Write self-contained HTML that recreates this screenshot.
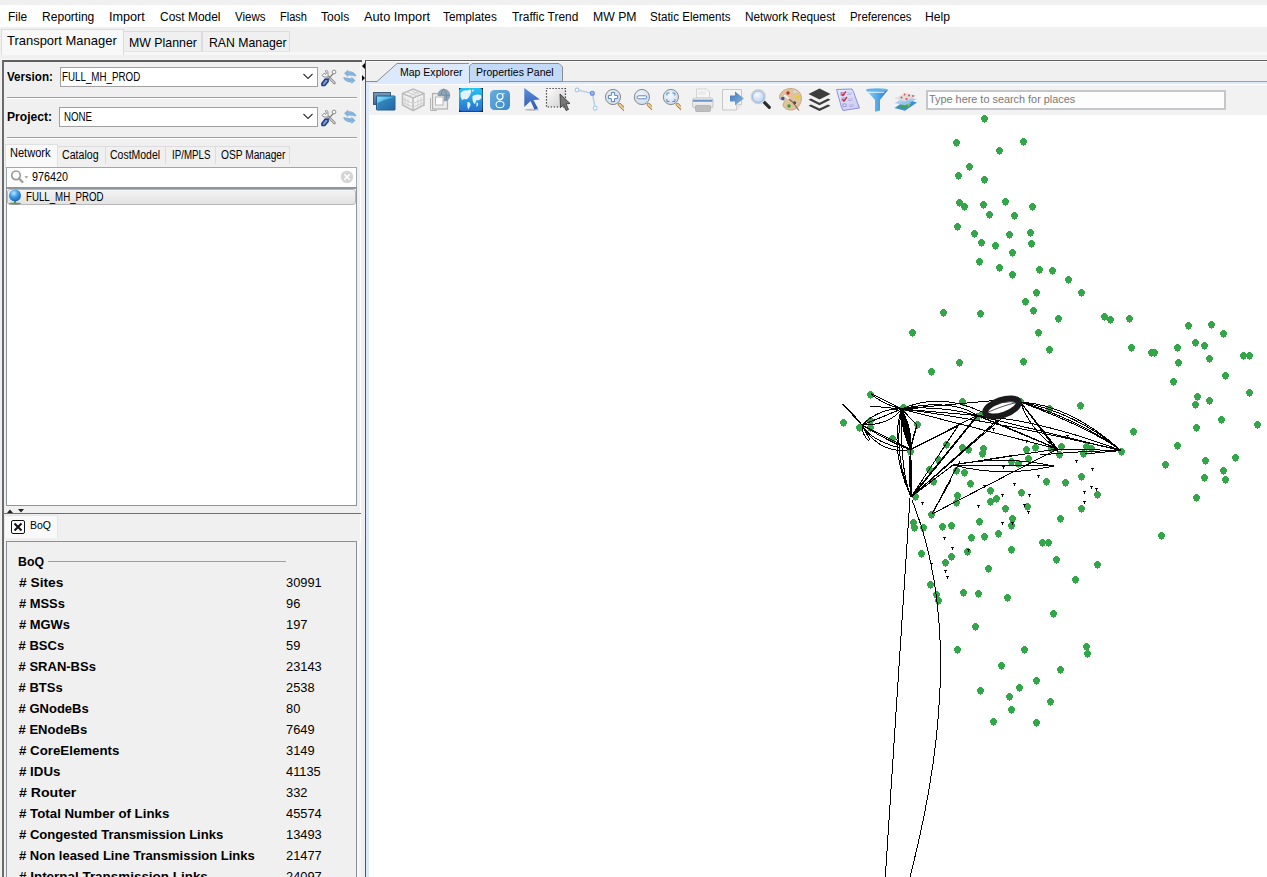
<!DOCTYPE html><html><head><meta charset="utf-8"><style>
html,body{margin:0;padding:0;width:1267px;height:877px;overflow:hidden;background:#f0f0f0;}
body{position:relative;font-family:"Liberation Sans",sans-serif;}
div,span,svg{position:absolute;}
.t{white-space:nowrap;display:block;}
</style></head><body>
<div style="left:0px;top:0px;width:1267px;height:5px;background:#f0f0f0"></div>
<div style="left:0px;top:5px;width:1267px;height:22px;background:#fff"></div>
<span class="t" style="left:8.3px;top:10.84px;font-size:12px;line-height:12px;color:#000;transform:scaleX(0.9930);transform-origin:0 0;">File</span>
<span class="t" style="left:41.6px;top:10.84px;font-size:12px;line-height:12px;color:#000;transform:scaleX(1.0052);transform-origin:0 0;">Reporting</span>
<span class="t" style="left:109.4px;top:10.84px;font-size:12px;line-height:12px;color:#000;transform:scaleX(1.0527);transform-origin:0 0;">Import</span>
<span class="t" style="left:159.7px;top:10.84px;font-size:12px;line-height:12px;color:#000;transform:scaleX(0.9968);transform-origin:0 0;">Cost Model</span>
<span class="t" style="left:234.5px;top:10.84px;font-size:12px;line-height:12px;color:#000;transform:scaleX(0.9593);transform-origin:0 0;">Views</span>
<span class="t" style="left:279.5px;top:10.84px;font-size:12px;line-height:12px;color:#000;transform:scaleX(0.9201);transform-origin:0 0;">Flash</span>
<span class="t" style="left:321px;top:10.84px;font-size:12px;line-height:12px;color:#000;transform:scaleX(1.0067);transform-origin:0 0;">Tools</span>
<span class="t" style="left:363.5px;top:10.84px;font-size:12px;line-height:12px;color:#000;transform:scaleX(1.0640);transform-origin:0 0;">Auto Import</span>
<span class="t" style="left:443.3px;top:10.84px;font-size:12px;line-height:12px;color:#000;transform:scaleX(0.9837);transform-origin:0 0;">Templates</span>
<span class="t" style="left:512px;top:10.84px;font-size:12px;line-height:12px;color:#000;transform:scaleX(0.9941);transform-origin:0 0;">Traffic Trend</span>
<span class="t" style="left:592.5px;top:10.84px;font-size:12px;line-height:12px;color:#000;transform:scaleX(1.0198);transform-origin:0 0;">MW PM</span>
<span class="t" style="left:649.5px;top:10.84px;font-size:12px;line-height:12px;color:#000;transform:scaleX(0.9656);transform-origin:0 0;">Static Elements</span>
<span class="t" style="left:744.5px;top:10.84px;font-size:12px;line-height:12px;color:#000;transform:scaleX(0.9811);transform-origin:0 0;">Network Request</span>
<span class="t" style="left:849.5px;top:10.84px;font-size:12px;line-height:12px;color:#000;transform:scaleX(0.9506);transform-origin:0 0;">Preferences</span>
<span class="t" style="left:924.5px;top:10.84px;font-size:12px;line-height:12px;color:#000;transform:scaleX(1.0130);transform-origin:0 0;">Help</span>
<div style="left:0px;top:52px;width:1267px;height:3px;background:#f7f7f7"></div>
<div style="left:0px;top:59px;width:1267px;height:1px;background:#f8f8f8"></div>
<div style="left:123px;top:31px;width:79px;height:21px;background:#f0f0f0;border:1px solid #dcdcdc;border-bottom:1px solid #e4e4e4;box-sizing:border-box"></div>
<div style="left:202px;top:31px;width:88px;height:21px;background:#f0f0f0;border:1px solid #dcdcdc;border-bottom:1px solid #e4e4e4;box-sizing:border-box"></div>
<div style="left:1px;top:29px;width:123px;height:26px;background:#f8f8f8;border:1px solid #dcdcdc;border-bottom:none;box-sizing:border-box"></div>
<span class="t" style="left:7.2px;top:34.00px;font-size:13px;line-height:13px;color:#000;transform:scaleX(0.9967);transform-origin:0 0;">Transport Manager</span>
<span class="t" style="left:129.4px;top:35.60px;font-size:13px;line-height:13px;color:#000;transform:scaleX(0.9494);transform-origin:0 0;">MW Planner</span>
<span class="t" style="left:209px;top:35.60px;font-size:13px;line-height:13px;color:#000;transform:scaleX(0.9433);transform-origin:0 0;">RAN Manager</span>
<div style="left:2px;top:60px;width:360px;height:817px;border-top:2px solid #5f5f5f;border-left:2px solid #6a6a6a;box-sizing:border-box;background:#f0f0f0"></div>
<div style="left:360px;top:62px;width:1px;height:815px;background:#fff"></div>
<span class="t" style="left:6.6px;top:71.34px;font-size:12px;line-height:12px;color:#000;font-weight:bold;transform:scaleX(0.9694);transform-origin:0 0;">Version:</span>
<div style="left:60px;top:67px;width:258px;height:20px;background:#fff;border:1px solid #a0a0a0;box-sizing:border-box"></div>
<span class="t" style="left:62px;top:71.34px;font-size:12px;line-height:12px;color:#000;transform:scaleX(0.8154);transform-origin:0 0;">FULL_MH_PROD</span>
<svg style="left:303px;top:73px" width="10" height="7"><path d="M0.5 1 L5 5.5 L9.5 1" fill="none" stroke="#333" stroke-width="1.1"/></svg>
<div style="left:7px;top:97px;width:350px;height:1px;background:#a0a0a0"></div>
<div style="left:7px;top:98px;width:350px;height:1px;background:#fff"></div>
<span class="t" style="left:6.6px;top:111.24px;font-size:12px;line-height:12px;color:#000;font-weight:bold;transform:scaleX(1.0072);transform-origin:0 0;">Project:</span>
<div style="left:59px;top:107px;width:259px;height:20px;background:#fff;border:1px solid #a0a0a0;box-sizing:border-box"></div>
<span class="t" style="left:63.9px;top:111.24px;font-size:12px;line-height:12px;color:#000;transform:scaleX(0.8105);transform-origin:0 0;">NONE</span>
<svg style="left:303px;top:113px" width="10" height="7"><path d="M0.5 1 L5 5.5 L9.5 1" fill="none" stroke="#333" stroke-width="1.1"/></svg>
<div style="left:7px;top:137px;width:350px;height:1px;background:#a0a0a0"></div>
<div style="left:7px;top:138px;width:350px;height:1px;background:#fff"></div>
<div style="left:57px;top:146px;width:49px;height:18px;background:#f0f0f0;border:1px solid #dcdcdc;border-bottom:none;box-sizing:border-box"></div>
<span class="t" style="left:62.4px;top:149.34px;font-size:12px;line-height:12px;color:#000;transform:scaleX(0.8849);transform-origin:0 0;">Catalog</span>
<div style="left:105px;top:146px;width:61px;height:18px;background:#f0f0f0;border:1px solid #dcdcdc;border-bottom:none;box-sizing:border-box"></div>
<span class="t" style="left:110.4px;top:149.34px;font-size:12px;line-height:12px;color:#000;transform:scaleX(0.8735);transform-origin:0 0;">CostModel</span>
<div style="left:165px;top:146px;width:51px;height:18px;background:#f0f0f0;border:1px solid #dcdcdc;border-bottom:none;box-sizing:border-box"></div>
<span class="t" style="left:171.6px;top:149.34px;font-size:12px;line-height:12px;color:#000;transform:scaleX(0.8110);transform-origin:0 0;">IP/MPLS</span>
<div style="left:215px;top:146px;width:75px;height:18px;background:#f0f0f0;border:1px solid #dcdcdc;border-bottom:none;box-sizing:border-box"></div>
<span class="t" style="left:221.4px;top:149.34px;font-size:12px;line-height:12px;color:#000;transform:scaleX(0.8494);transform-origin:0 0;">OSP Manager</span>
<div style="left:5px;top:144px;width:53px;height:24px;background:#f9f9f9;border:1px solid #e0e0e0;border-bottom:none;box-sizing:border-box"></div>
<span class="t" style="left:9.9px;top:147.24px;font-size:12px;line-height:12px;color:#000;transform:scaleX(0.9203);transform-origin:0 0;">Network</span>
<div style="left:6px;top:167px;width:351px;height:21px;background:#fff;border:1px solid #a0a6ae;box-sizing:border-box"></div>
<span class="t" style="left:31.5px;top:171.14px;font-size:12px;line-height:12px;color:#000;transform:scaleX(0.8990);transform-origin:0 0;">976420</span>
<div style="left:6px;top:187px;width:351px;height:319px;background:#fff;border:1px solid #8f959c;border-top:none;box-sizing:border-box"></div>
<div style="left:6px;top:187px;width:351px;height:2px;background:#8f959c"></div>
<div style="left:7px;top:189px;width:349px;height:16px;background:linear-gradient(#f4f4f4,#e2e2e2);border:1px solid #b8b8b8;border-radius:3px;box-sizing:border-box"></div>
<span class="t" style="left:26.4px;top:191.34px;font-size:12px;line-height:12px;color:#000;transform:scaleX(0.8081);transform-origin:0 0;">FULL_MH_PROD</span>
<div style="left:4px;top:513px;width:357px;height:1px;background:#6e6e6e"></div>
<svg style="left:6px;top:508px" width="20" height="6"><path d="M1 5 L4 1.5 L7 5Z M12 1 L18 1 L15 4.5Z" fill="#222"/></svg>
<div style="left:4px;top:515px;width:54px;height:23px;background:#f9f9f9;border:1px solid #e6e6e6;border-bottom:none;box-sizing:border-box"></div>
<svg style="left:11px;top:520px" width="14" height="14"><rect x="0.5" y="0.5" width="13" height="13" rx="1.5" fill="#fff" stroke="#111"/><path d="M3.5 3.5 L10.5 10.5 M10.5 3.5 L3.5 10.5" stroke="#111" stroke-width="2"/></svg>
<span class="t" style="left:29.8px;top:520.49px;font-size:11px;line-height:11px;color:#000;transform:scaleX(0.9541);transform-origin:0 0;">BoQ</span>
<div style="left:6px;top:541px;width:351px;height:336px;background:#f0f0f0;border:1px solid #8a9098;border-bottom:none;box-sizing:border-box"></div>
<div style="left:357px;top:541px;width:4px;height:336px;background:#f7f7f7"></div>
<span class="t" style="left:18px;top:554.50px;font-size:13px;line-height:13px;color:#000;font-weight:bold;transform:scaleX(0.9475);transform-origin:0 0;">BoQ</span>
<div style="left:48px;top:561px;width:238px;height:1px;background:#a0a0a0"></div>
<span class="t" style="left:18.6px;top:576.00px;font-size:13px;line-height:13px;color:#000;font-weight:bold;transform:scaleX(1.0593);transform-origin:0 0;"># Sites</span>
<span class="t" style="left:285.6px;top:577.13px;font-size:12.6px;line-height:12.6px;color:#000;transform:scaleX(1.0200);transform-origin:0 0;">30991</span>
<span class="t" style="left:18.6px;top:597.00px;font-size:13px;line-height:13px;color:#000;font-weight:bold;transform:scaleX(0.9926);transform-origin:0 0;"># MSSs</span>
<span class="t" style="left:285.6px;top:598.13px;font-size:12.6px;line-height:12.6px;color:#000;transform:scaleX(1.0200);transform-origin:0 0;">96</span>
<span class="t" style="left:18.6px;top:618.00px;font-size:13px;line-height:13px;color:#000;font-weight:bold;transform:scaleX(0.9945);transform-origin:0 0;"># MGWs</span>
<span class="t" style="left:285.6px;top:619.13px;font-size:12.6px;line-height:12.6px;color:#000;transform:scaleX(1.0200);transform-origin:0 0;">197</span>
<span class="t" style="left:18.6px;top:639.00px;font-size:13px;line-height:13px;color:#000;font-weight:bold;transform:scaleX(1.0000);transform-origin:0 0;"># BSCs</span>
<span class="t" style="left:285.6px;top:640.13px;font-size:12.6px;line-height:12.6px;color:#000;transform:scaleX(1.0200);transform-origin:0 0;">59</span>
<span class="t" style="left:18.6px;top:660.00px;font-size:13px;line-height:13px;color:#000;font-weight:bold;transform:scaleX(1.0000);transform-origin:0 0;"># SRAN-BSs</span>
<span class="t" style="left:285.6px;top:661.13px;font-size:12.6px;line-height:12.6px;color:#000;transform:scaleX(1.0200);transform-origin:0 0;">23143</span>
<span class="t" style="left:18.6px;top:681.00px;font-size:13px;line-height:13px;color:#000;font-weight:bold;transform:scaleX(1.0000);transform-origin:0 0;"># BTSs</span>
<span class="t" style="left:285.6px;top:682.13px;font-size:12.6px;line-height:12.6px;color:#000;transform:scaleX(1.0200);transform-origin:0 0;">2538</span>
<span class="t" style="left:18.6px;top:702.00px;font-size:13px;line-height:13px;color:#000;font-weight:bold;transform:scaleX(1.0000);transform-origin:0 0;"># GNodeBs</span>
<span class="t" style="left:285.6px;top:703.13px;font-size:12.6px;line-height:12.6px;color:#000;transform:scaleX(1.0200);transform-origin:0 0;">80</span>
<span class="t" style="left:18.6px;top:723.00px;font-size:13px;line-height:13px;color:#000;font-weight:bold;transform:scaleX(1.0000);transform-origin:0 0;"># ENodeBs</span>
<span class="t" style="left:285.6px;top:724.13px;font-size:12.6px;line-height:12.6px;color:#000;transform:scaleX(1.0200);transform-origin:0 0;">7649</span>
<span class="t" style="left:18.6px;top:744.00px;font-size:13px;line-height:13px;color:#000;font-weight:bold;transform:scaleX(1.0218);transform-origin:0 0;"># CoreElements</span>
<span class="t" style="left:285.6px;top:745.13px;font-size:12.6px;line-height:12.6px;color:#000;transform:scaleX(1.0200);transform-origin:0 0;">3149</span>
<span class="t" style="left:18.6px;top:765.00px;font-size:13px;line-height:13px;color:#000;font-weight:bold;transform:scaleX(1.0232);transform-origin:0 0;"># IDUs</span>
<span class="t" style="left:285.6px;top:766.13px;font-size:12.6px;line-height:12.6px;color:#000;transform:scaleX(1.0200);transform-origin:0 0;">41135</span>
<span class="t" style="left:18.6px;top:786.00px;font-size:13px;line-height:13px;color:#000;font-weight:bold;transform:scaleX(1.0867);transform-origin:0 0;"># Router</span>
<span class="t" style="left:285.6px;top:787.13px;font-size:12.6px;line-height:12.6px;color:#000;transform:scaleX(1.0200);transform-origin:0 0;">332</span>
<span class="t" style="left:18.6px;top:807.00px;font-size:13px;line-height:13px;color:#000;font-weight:bold;transform:scaleX(1.0217);transform-origin:0 0;"># Total Number of Links</span>
<span class="t" style="left:285.6px;top:808.13px;font-size:12.6px;line-height:12.6px;color:#000;transform:scaleX(1.0200);transform-origin:0 0;">45574</span>
<span class="t" style="left:18.6px;top:828.00px;font-size:13px;line-height:13px;color:#000;font-weight:bold;transform:scaleX(1.0064);transform-origin:0 0;"># Congested Transmission Links</span>
<span class="t" style="left:285.6px;top:829.13px;font-size:12.6px;line-height:12.6px;color:#000;transform:scaleX(1.0200);transform-origin:0 0;">13493</span>
<span class="t" style="left:18.6px;top:849.00px;font-size:13px;line-height:13px;color:#000;font-weight:bold;transform:scaleX(1.0012);transform-origin:0 0;"># Non leased Line Transmission Links</span>
<span class="t" style="left:285.6px;top:850.13px;font-size:12.6px;line-height:12.6px;color:#000;transform:scaleX(1.0200);transform-origin:0 0;">21477</span>
<span class="t" style="left:18.6px;top:870.00px;font-size:13px;line-height:13px;color:#000;font-weight:bold;transform:scaleX(1.0330);transform-origin:0 0;"># Internal Transmission Links</span>
<span class="t" style="left:285.6px;top:871.13px;font-size:12.6px;line-height:12.6px;color:#000;transform:scaleX(1.0200);transform-origin:0 0;">24097</span>
<div style="left:365px;top:60px;width:902px;height:817px;border-top:1px solid #606060;border-left:1px solid #555;box-sizing:border-box;background:#f0f0f0"></div>
<div style="left:366px;top:61px;width:901px;height:1px;background:#fff"></div>
<div style="left:366px;top:81px;width:901px;height:1px;background:#a0a0a0"></div>
<div style="left:366px;top:82px;width:901px;height:2px;background:#dce8fb"></div>
<div style="left:366px;top:82px;width:3px;height:795px;background:#dce8fb"></div>
<div style="left:369px;top:84px;width:898px;height:1px;background:#fff"></div>
<div style="left:369px;top:85px;width:898px;height:30px;background:#f2f2f2"></div>
<div style="left:369px;top:115px;width:898px;height:762px;background:#fff"></div>
<svg style="left:366px;top:62px" width="210" height="22"><path d="M11 19.5 L31 1.5 L103 1.5 L103 21 L11 21Z" fill="#dce8fb"/><path d="M0 19.5 L11 19.5 L31 1.5 L103 1.5" fill="none" stroke="#8c8c8c"/><path d="M103.5 21 L103.5 4 L106 1.5 L193 1.5 L196.5 5 L196.5 19.5 L103.5 19.5Z" fill="#c2d9f8" stroke="#8c8c8c"/></svg>
<span class="t" style="left:399.5px;top:66.69px;font-size:11px;line-height:11px;color:#000;transform:scaleX(0.9554);transform-origin:0 0;">Map Explorer</span>
<span class="t" style="left:476.3px;top:66.69px;font-size:11px;line-height:11px;color:#000;transform:scaleX(0.9554);transform-origin:0 0;">Properties Panel</span>
<div style="left:926px;top:90px;width:300px;height:20px;background:#fdfdfd;border:2px solid #c4c6ca;box-sizing:border-box"></div>
<span class="t" style="left:929px;top:93.08px;font-size:11.6px;line-height:11.6px;color:#7a7a7a;transform:scaleX(0.9376);transform-origin:0 0;">Type here to search for places</span>
<svg style="left:361px;top:62px" width="5" height="20"><path d="M4 1 L1 4 L4 7Z M1 13 L4 16 L1 19Z" fill="#000"/></svg><svg style="left:372px;top:90px" width="25" height="22" viewBox="0 0 25 22"><defs><linearGradient id="g1b" x1="0" y1="0" x2="0" y2="1"><stop offset="0" stop-color="#7d9ab3"/><stop offset="1" stop-color="#3f6585"/></linearGradient><linearGradient id="g1f" x1="0" y1="0" x2="1" y2="1"><stop offset="0" stop-color="#9fe3fb"/><stop offset="0.45" stop-color="#3fb3e6"/><stop offset="1" stop-color="#1c5c9c"/></linearGradient></defs><rect x="1.5" y="2.5" width="17" height="12" fill="url(#g1b)" stroke="#3e5f7c" stroke-width="1"/><rect x="4.5" y="6" width="18.5" height="14" rx="0.5" fill="url(#g1f)" stroke="#1d5a8e" stroke-width="1"/><path d="M5.5 13 Q14 9 22.5 7 L22.5 19.5 L5.5 19.5Z" fill="#2a6aa5" opacity="0.7"/></svg><svg style="left:401px;top:87px" width="25" height="25" viewBox="0 0 25 25"><g fill="none" stroke="#bdbdbd" stroke-width="1.6"><path d="M12 2 L23 6.5 L23 18 L12 23.5 L1.5 18 L1.5 6.5Z"/><path d="M1.5 6.5 L12 11 L23 6.5 M12 11 L12 23.5"/><path d="M4 10 L4 19 M7 11.5 L7 21 M17 11.5 L17 21 M20 10 L20 19.5 M2 12 L12 16.5 L23 12 M2 15.5 L12 20 L23 15.5 M6 5 L16 9 M10 3.5 L20 8 M18 4.5 L8 9" stroke-width="1" stroke="#cfcfcf"/></g></svg><svg style="left:428px;top:87px" width="26" height="26" viewBox="0 0 26 26"><path d="M2.5 11 L2.5 23.5 L9 23.5" fill="none" stroke="#b4b4b4" stroke-width="1"/><rect x="4.5" y="6.5" width="15" height="15.5" fill="#ececec" stroke="#b0b0b0" stroke-width="1.2"/><rect x="7.5" y="10" width="7.5" height="8" fill="#fff" stroke="#b8b8b8" stroke-width="1"/><path d="M9.5 8.5 A6.4 6.4 0 1 1 15.6 14.6 L15.6 8.5Z" fill="#8fa6b7"/><path d="M9.8 8.3 L22 8.3 M15.5 1.8 Q13 5 13.3 8.5 M15.5 1.8 Q19.5 5 18.2 14" fill="none" stroke="#6d8799" stroke-width="0.8"/></svg><svg style="left:458px;top:87px" width="26" height="26" viewBox="0 0 26 26"><rect x="1" y="1" width="24" height="24" fill="#1b1b1b"/><rect x="1" y="1" width="23.5" height="23.5" rx="3" fill="url(#g4)"/><g fill="#f2f9ff" opacity="0.92"><path d="M2.5 6 Q5 2.5 9 3.5 L12 2.5 Q14 4 12.5 7 L11 10 Q9 13.5 6.5 12 L4 13 Q2 10 2.5 6Z"/><path d="M13.5 3 L16 2.5 L15 5Z"/><path d="M14.5 9 Q18 6.5 23 8 L23.5 11 Q21 14.5 18.5 13 L17 17 Q15 16 14.5 13Z"/><path d="M9.5 15 Q12.5 14.5 12.5 18 L10.5 22.5 Q8.5 20 9.5 15Z"/><path d="M18.5 15.5 Q20.5 15 20 18.5 L18.5 20Z"/></g><linearGradient id="g4" x1="0" y1="0" x2="0" y2="1"><stop offset="0" stop-color="#27c3f4"/><stop offset="1" stop-color="#2a6fd0"/></linearGradient></svg><svg style="left:489px;top:89px" width="22" height="22" viewBox="0 0 22 22"><defs><linearGradient id="g5" x1="0" y1="0" x2="1" y2="1"><stop offset="0" stop-color="#6aaee0"/><stop offset="1" stop-color="#3a88c6"/></linearGradient></defs><rect x="1" y="1" width="20" height="20" rx="4.5" fill="url(#g5)"/><circle cx="11" cy="7.5" r="3" fill="none" stroke="#fff" stroke-width="1.1"/><ellipse cx="11" cy="15.5" rx="4" ry="3.3" fill="none" stroke="#fff" stroke-width="1.1"/><path d="M13 10 Q9 11.5 10 12.3 M13.5 5 L15.5 4.5" fill="none" stroke="#fff" stroke-width="1"/></svg><svg style="left:520px;top:86px" width="24" height="26" viewBox="0 0 24 26"><defs><linearGradient id="g6" x1="0" y1="0" x2="0" y2="1"><stop offset="0" stop-color="#5b8fdc"/><stop offset="1" stop-color="#3059b0"/></linearGradient></defs><ellipse cx="12" cy="23.8" rx="7" ry="1" fill="#555" opacity="0.35"/><path d="M4.3 2 L20 13.6 L13.5 14 L18 22.6 L14.5 23.6 L10.5 15 L4.3 20.9Z" fill="url(#g6)"/></svg><svg style="left:544px;top:86px" width="28" height="27" viewBox="0 0 28 27"><defs><linearGradient id="g7" x1="0" y1="0" x2="1" y2="1"><stop offset="0" stop-color="#fdfdfd"/><stop offset="1" stop-color="#cfcfcf"/></linearGradient></defs><rect x="2.5" y="2.5" width="19" height="18.5" fill="url(#g7)"/><rect x="2.5" y="2.5" width="19" height="18.5" fill="none" stroke="#222" stroke-width="1.2" stroke-dasharray="1.2 1.8"/><path d="M16 8 L26 17.5 L22 17.8 L24.5 23.5 L22 24.5 L19.5 18.8 L16.5 21.5Z" fill="#777" stroke="#333" stroke-width="0.8"/></svg><svg style="left:573px;top:87px" width="26" height="25" viewBox="0 0 26 25"><path d="M4 3 L19.3 6.3 L22.2 21.2" fill="none" stroke="#b7d0ea" stroke-width="1.5"/><circle cx="4" cy="3" r="1.9" fill="#fff" stroke="#a9c6e8" stroke-width="1.1"/><circle cx="19.3" cy="6.3" r="2" fill="#9bb6ea" stroke="#6a8be0" stroke-width="1.1"/><circle cx="22.2" cy="21.2" r="1.9" fill="#fff" stroke="#a9c6e8" stroke-width="1.1"/></svg><svg style="left:604px;top:87px" width="20" height="26" viewBox="0 0 20 26"><defs><radialGradient id="gm" cx="0.45" cy="0.4" r="0.6"><stop offset="0" stop-color="#f6f9fd"/><stop offset="1" stop-color="#ccdaeb"/></radialGradient></defs><g transform="translate(9.0,10)"><line x1="6.5" y1="7.5" x2="11.5" y2="12.5" stroke="#a87636" stroke-width="3.4" stroke-linecap="round"/><line x1="6.5" y1="7.5" x2="11.5" y2="12.5" stroke="#ecd099" stroke-width="1.8" stroke-linecap="round"/><circle r="7.6" fill="url(#gm)" stroke="#7f7f7f" stroke-width="0.9"/><path d="M-1.6 -4.6 h3.2 v3 h3 v3.2 h-3 v3 h-3.2 v-3 h-3 v-3.2 h3z" fill="#fff" stroke="#4777c0" stroke-width="0.9" stroke-linejoin="round"/></g></svg><svg style="left:632px;top:87px" width="20" height="26" viewBox="0 0 20 26"><g transform="translate(9.9,10)"><line x1="6.5" y1="7.5" x2="11.5" y2="12.5" stroke="#a87636" stroke-width="3.4" stroke-linecap="round"/><line x1="6.5" y1="7.5" x2="11.5" y2="12.5" stroke="#ecd099" stroke-width="1.8" stroke-linecap="round"/><circle r="7.6" fill="url(#gm)" stroke="#7f7f7f" stroke-width="0.9"/><rect x="-4.8" y="-1.2" width="9.6" height="3" rx="1.4" fill="#fff" stroke="#4777c0" stroke-width="0.9"/></g></svg><svg style="left:661px;top:87px" width="20" height="26" viewBox="0 0 20 26"><g transform="translate(9.9,10)"><line x1="6.5" y1="7.5" x2="11.5" y2="12.5" stroke="#a87636" stroke-width="3.4" stroke-linecap="round"/><line x1="6.5" y1="7.5" x2="11.5" y2="12.5" stroke="#ecd099" stroke-width="1.8" stroke-linecap="round"/><circle r="7.6" fill="url(#gm)" stroke="#7f7f7f" stroke-width="0.9"/><path d="M-4 -1.5 v-2.5 h2.5 M1.5 -4 h2.5 v2.5 M4 2 v2.5 h-2.5 M-1.5 4.5 h-2.5 v-2.5" fill="none" stroke="#4d8bd4" stroke-width="1"/></g></svg><svg style="left:691px;top:88px" width="24" height="25" viewBox="0 0 24 25"><defs><linearGradient id="gp" x1="0" y1="0" x2="0" y2="1"><stop offset="0" stop-color="#fafafa"/><stop offset="1" stop-color="#dedede"/></linearGradient></defs><path d="M5.5 1 h10 l3 3 v6 h-13z" fill="#f7f7f7" stroke="#cfcfcf" stroke-width="0.9"/><path d="M7 4h8 M7 6h8" stroke="#d9d9d9" stroke-width="0.8"/><rect x="1.5" y="10" width="20.5" height="10" rx="2" fill="url(#gp)" stroke="#c4c4c4" stroke-width="0.9"/><rect x="2" y="11.6" width="19.5" height="2.2" fill="#6e98d0"/><rect x="4.5" y="17.5" width="15" height="6" rx="1" fill="#bdbdbd" stroke="#a9a9a9" stroke-width="0.7"/></svg><svg style="left:721px;top:88px" width="25" height="25" viewBox="0 0 25 25"><defs><linearGradient id="ge" x1="0" y1="0" x2="1" y2="1"><stop offset="0" stop-color="#3f78b8"/><stop offset="1" stop-color="#8ab4e4"/></linearGradient></defs><path d="M1.5 1.5 h19 v15 l-5 5.5 h-14z" fill="#f4f4f4" stroke="#c8c8c8" stroke-width="1"/><path d="M15.5 22 v-5.5 h5" fill="#e8e8e8" stroke="#c8c8c8" stroke-width="0.8"/><path d="M9 7.5 h5 v-4 l8.8 7 l-8.8 7 v-4 h-5z" fill="url(#ge)"/></svg><svg style="left:749px;top:88px" width="24" height="24" viewBox="0 0 24 24"><defs><radialGradient id="gs" cx="0.4" cy="0.35" r="0.7"><stop offset="0" stop-color="#f7faff"/><stop offset="1" stop-color="#b9d0ef"/></radialGradient></defs><line x1="14.5" y1="13.5" x2="20.3" y2="19.3" stroke="#2d2d2d" stroke-width="3.2" stroke-linecap="round"/><circle cx="9.3" cy="8.7" r="7" fill="#dde8f6" stroke="#cfcfcf" stroke-width="1.2"/><circle cx="9.3" cy="8.7" r="5.8" fill="url(#gs)" stroke="#93b6e3" stroke-width="1"/></svg><svg style="left:778px;top:87px" width="25" height="25" viewBox="0 0 25 25"><path d="M12 1.5 C19 1 24 6 23.5 12 C23 17 20 22 14 23 C9 23.5 5.5 21 5 18 C4.8 16 7 15.5 6 13.5 C5 12 2 14 1.5 11 C1 7 5 2 12 1.5Z" fill="#dec39b" stroke="#bf9f72" stroke-width="0.8"/><circle cx="10" cy="6" r="1.7" fill="#c8262e"/><circle cx="17" cy="4.6" r="1.6" fill="#d7dbe0"/><circle cx="19.6" cy="10" r="1.7" fill="#e8cc2a"/><circle cx="4.8" cy="11.5" r="1.7" fill="#2753c8"/><circle cx="16.5" cy="15.8" r="1.6" fill="#3d4650"/><circle cx="11" cy="19" r="1.7" fill="#2e9d3a"/><path d="M6 8 L14.5 15 L21 23.5" fill="none" stroke="#7e6a5a" stroke-width="1.1"/><path d="M6 8 L11 12" stroke="#f4f4f4" stroke-width="2"/></svg><svg style="left:807px;top:87px" width="25" height="26" viewBox="0 0 25 26"><path d="M1.5 7 L12.5 1.5 L23.5 7 L12.5 12.5Z" fill="#3d3d3d"/><path d="M1.5 12.8 L4 11.5 L12.5 15.8 L21 11.5 L23.5 12.8 L12.5 18.2Z" fill="#3d3d3d"/><path d="M1.5 18.7 L4 17.4 L12.5 21.6 L21 17.4 L23.5 18.7 L12.5 24Z" fill="#3d3d3d"/></svg><svg style="left:835px;top:88px" width="26" height="24" viewBox="0 0 26 24"><defs><linearGradient id="gc" x1="0" y1="0" x2="1" y2="1"><stop offset="0" stop-color="#e8ecfc"/><stop offset="1" stop-color="#c9c6f2"/></linearGradient></defs><path d="M1.5 1.5 L17 1 Q19 4 20 8 L24.5 20 L8 22.5 Q6 19 5 14 Z" fill="url(#gc)" stroke="#8d8fe0" stroke-width="1"/><rect x="6" y="4.5" width="3" height="3" fill="#fff" stroke="#7a7ad0" stroke-width="0.7"/><rect x="7" y="10" width="3" height="3" fill="#fff" stroke="#7a7ad0" stroke-width="0.7"/><rect x="8" y="16" width="3" height="2.5" fill="#eef" stroke="#7a7ad0" stroke-width="0.7"/><path d="M6.5 5.5 L8 7.5 L11 3.5 M7.5 11 L9 13 L12 9" fill="none" stroke="#e0262e" stroke-width="1.3"/><path d="M12 5h5 M12 6.5h4 M13 11h5 M13 12.5h4 M14 17h5 M14 18.5h4" stroke="#9aa0d8" stroke-width="0.6"/></svg><svg style="left:865px;top:87px" width="25" height="26" viewBox="0 0 25 26"><defs><linearGradient id="gf" x1="0" y1="0" x2="1" y2="0"><stop offset="0" stop-color="#9dd3f6"/><stop offset="0.55" stop-color="#4ea6e6"/><stop offset="1" stop-color="#2f78cc"/></linearGradient></defs><path d="M1 3 L23 3 L15 13 L15 23.5 L10 24.8 L10 13Z" fill="url(#gf)"/><ellipse cx="12" cy="2.9" rx="11.2" ry="1.7" fill="#5fb2ea"/><path d="M3 4.8 L20 4.8 L19 5.8 L4 5.8Z" fill="#fff" opacity="0.9"/></svg><svg style="left:893px;top:91px" width="26" height="21" viewBox="0 0 26 21"><path d="M1.5 17 L14 8.5 L24 11.5 L12 19.8Z" fill="#3d8fd9"/><path d="M5 16 L12 12 L17 14 L11 17.5Z" fill="#40a544" opacity="0.9"/><path d="M14 11 L18 12 L15 16Z" fill="#9cc43a"/><path d="M1.5 12 L13 6 L23.5 8 L12 14.5Z" fill="#9dc9f0" opacity="0.9"/><path d="M1.5 7.5 L13 2 L24 4.5 L12 10.5Z" fill="#dcdcdc" opacity="0.95"/><circle cx="8.5" cy="6.5" r="1" fill="#e24848"/><circle cx="13.5" cy="8" r="1" fill="#e24848"/><circle cx="16" cy="4.5" r="1" fill="#e24848"/><circle cx="20" cy="5" r="0.9" fill="#e24848"/><circle cx="11.5" cy="3.5" r="0.9" fill="#e24848"/></svg><svg style="left:318px;top:66px" width="42" height="22" viewBox="0 0 42 22"><path d="M10.5 11 L16.5 17" stroke="#8c8c8c" stroke-width="2.6" stroke-linecap="round"/><path d="M10.5 11 L16.5 17" stroke="#f4f4f4" stroke-width="1" stroke-linecap="round"/><path d="M4 9.5 L6.5 7 L7.5 8.5 L8.5 7.5 L7.5 5 L8.5 4 Q10.5 5 10 8.5 L10.2 11 L6 11 Z" fill="#f4f4f4" stroke="#8c8c8c" stroke-width="1"/><path d="M9.5 14 L17 5.5" stroke="#8c8c8c" stroke-width="1.4"/><circle cx="16" cy="6" r="1.9" fill="#fafafa" stroke="#8c8c8c" stroke-width="1"/><path d="M3.8 17.5 L7.3 13 L10 13.2 L10.2 15.5 L6.7 19.5 L4 19.5Z" fill="#8b9bb3" stroke="#173c98" stroke-width="1.5" stroke-linejoin="round"/><path d="M26 7.3 L30.2 3.6 L30.2 5.3 Q35.8 4.8 38.4 9.6 L37.8 10.6 Q34.5 9.4 30.2 9.5 L30.2 11.2Z" fill="#86b3dc"/><path d="M37.6 14.4 L33.4 18.1 L33.4 16.4 Q27.8 16.9 25.2 12.1 L25.8 11.1 Q29.1 12.3 33.4 12.2 L33.4 10.5Z" fill="#86b3dc"/></svg><svg style="left:318px;top:106px" width="42" height="22" viewBox="0 0 42 22"><path d="M10.5 11 L16.5 17" stroke="#8c8c8c" stroke-width="2.6" stroke-linecap="round"/><path d="M10.5 11 L16.5 17" stroke="#f4f4f4" stroke-width="1" stroke-linecap="round"/><path d="M4 9.5 L6.5 7 L7.5 8.5 L8.5 7.5 L7.5 5 L8.5 4 Q10.5 5 10 8.5 L10.2 11 L6 11 Z" fill="#f4f4f4" stroke="#8c8c8c" stroke-width="1"/><path d="M9.5 14 L17 5.5" stroke="#8c8c8c" stroke-width="1.4"/><circle cx="16" cy="6" r="1.9" fill="#fafafa" stroke="#8c8c8c" stroke-width="1"/><path d="M3.8 17.5 L7.3 13 L10 13.2 L10.2 15.5 L6.7 19.5 L4 19.5Z" fill="#8b9bb3" stroke="#173c98" stroke-width="1.5" stroke-linejoin="round"/><path d="M26 7.3 L30.2 3.6 L30.2 5.3 Q35.8 4.8 38.4 9.6 L37.8 10.6 Q34.5 9.4 30.2 9.5 L30.2 11.2Z" fill="#86b3dc"/><path d="M37.6 14.4 L33.4 18.1 L33.4 16.4 Q27.8 16.9 25.2 12.1 L25.8 11.1 Q29.1 12.3 33.4 12.2 L33.4 10.5Z" fill="#86b3dc"/></svg><svg style="left:8px;top:168px" width="24" height="17" viewBox="0 0 24 17"><circle cx="8" cy="7.3" r="4.3" fill="none" stroke="#9a9a9a" stroke-width="1.7"/><path d="M11 10.5 L14.5 14" stroke="#9a9a9a" stroke-width="2.2" stroke-linecap="round"/><path d="M16.3 8.3 L20.3 8.3 L18.3 10.5Z" fill="#9a9a9a"/></svg><svg style="left:340px;top:170px" width="14" height="14" viewBox="0 0 14 14"><circle cx="7" cy="7" r="6.2" fill="#d5d5d5"/><path d="M4.3 4.3 L9.7 9.7 M9.7 4.3 L4.3 9.7" stroke="#fff" stroke-width="1.6"/></svg><svg style="left:8px;top:188px" width="16" height="18" viewBox="0 0 16 18"><defs><radialGradient id="ggl" cx="0.4" cy="0.3" r="0.7"><stop offset="0" stop-color="#bfe6ff"/><stop offset="0.5" stop-color="#3b9be6"/><stop offset="1" stop-color="#1766c0"/></radialGradient></defs><ellipse cx="7" cy="15.5" rx="6" ry="1" fill="#444" opacity="0.6"/><rect x="6" y="13" width="2" height="3" fill="#3aaa3a"/><circle cx="7" cy="7.5" r="6" fill="url(#ggl)"/></svg><svg style="left:0;top:0" width="1267" height="877"><defs><clipPath id="mc"><rect x="369" y="115" width="898" height="762"/></clipPath></defs><g clip-path="url(#mc)"><path d="M983 115h3v1h-3zM982 116h5v1h-5zM981 117h7v1h-7zM981 118h7v1h-7zM981 119h7v1h-7zM982 120h5v1h-5zM982 121h5v1h-5zM984 122h1v1h-1zM955 139h3v1h-3zM954 140h5v1h-5zM953 141h7v1h-7zM953 142h7v1h-7zM953 143h7v1h-7zM954 144h5v1h-5zM954 145h5v1h-5zM956 146h1v1h-1zM1022 138h3v1h-3zM1021 139h5v1h-5zM1020 140h7v1h-7zM1020 141h7v1h-7zM1020 142h7v1h-7zM1021 143h5v1h-5zM1021 144h5v1h-5zM1023 145h1v1h-1zM998 147h3v1h-3zM997 148h5v1h-5zM996 149h7v1h-7zM996 150h7v1h-7zM996 151h7v1h-7zM997 152h5v1h-5zM997 153h5v1h-5zM999 154h1v1h-1zM968 163h3v1h-3zM967 164h5v1h-5zM966 165h7v1h-7zM966 166h7v1h-7zM966 167h7v1h-7zM967 168h5v1h-5zM967 169h5v1h-5zM969 170h1v1h-1zM957 172h3v1h-3zM956 173h5v1h-5zM955 174h7v1h-7zM955 175h7v1h-7zM955 176h7v1h-7zM956 177h5v1h-5zM956 178h5v1h-5zM958 179h1v1h-1zM983 176h3v1h-3zM982 177h5v1h-5zM981 178h7v1h-7zM981 179h7v1h-7zM981 180h7v1h-7zM982 181h5v1h-5zM982 182h5v1h-5zM984 183h1v1h-1zM958 199h3v1h-3zM957 200h5v1h-5zM956 201h7v1h-7zM956 202h7v1h-7zM956 203h7v1h-7zM957 204h5v1h-5zM957 205h5v1h-5zM959 206h1v1h-1zM963 203h3v1h-3zM962 204h5v1h-5zM961 205h7v1h-7zM961 206h7v1h-7zM961 207h7v1h-7zM962 208h5v1h-5zM962 209h5v1h-5zM964 210h1v1h-1zM982 201h3v1h-3zM981 202h5v1h-5zM980 203h7v1h-7zM980 204h7v1h-7zM980 205h7v1h-7zM981 206h5v1h-5zM981 207h5v1h-5zM983 208h1v1h-1zM1004 198h3v1h-3zM1003 199h5v1h-5zM1002 200h7v1h-7zM1002 201h7v1h-7zM1002 202h7v1h-7zM1003 203h5v1h-5zM1003 204h5v1h-5zM1005 205h1v1h-1zM1031 203h3v1h-3zM1030 204h5v1h-5zM1029 205h7v1h-7zM1029 206h7v1h-7zM1029 207h7v1h-7zM1030 208h5v1h-5zM1030 209h5v1h-5zM1032 210h1v1h-1zM988 211h3v1h-3zM987 212h5v1h-5zM986 213h7v1h-7zM986 214h7v1h-7zM986 215h7v1h-7zM987 216h5v1h-5zM987 217h5v1h-5zM989 218h1v1h-1zM1013 212h3v1h-3zM1012 213h5v1h-5zM1011 214h7v1h-7zM1011 215h7v1h-7zM1011 216h7v1h-7zM1012 217h5v1h-5zM1012 218h5v1h-5zM1014 219h1v1h-1zM956 223h3v1h-3zM955 224h5v1h-5zM954 225h7v1h-7zM954 226h7v1h-7zM954 227h7v1h-7zM955 228h5v1h-5zM955 229h5v1h-5zM957 230h1v1h-1zM973 230h3v1h-3zM972 231h5v1h-5zM971 232h7v1h-7zM971 233h7v1h-7zM971 234h7v1h-7zM972 235h5v1h-5zM972 236h5v1h-5zM974 237h1v1h-1zM1008 231h3v1h-3zM1007 232h5v1h-5zM1006 233h7v1h-7zM1006 234h7v1h-7zM1006 235h7v1h-7zM1007 236h5v1h-5zM1007 237h5v1h-5zM1009 238h1v1h-1zM1029 229h3v1h-3zM1028 230h5v1h-5zM1027 231h7v1h-7zM1027 232h7v1h-7zM1027 233h7v1h-7zM1028 234h5v1h-5zM1028 235h5v1h-5zM1030 236h1v1h-1zM980 239h3v1h-3zM979 240h5v1h-5zM978 241h7v1h-7zM978 242h7v1h-7zM978 243h7v1h-7zM979 244h5v1h-5zM979 245h5v1h-5zM981 246h1v1h-1zM994 242h3v1h-3zM993 243h5v1h-5zM992 244h7v1h-7zM992 245h7v1h-7zM992 246h7v1h-7zM993 247h5v1h-5zM993 248h5v1h-5zM995 249h1v1h-1zM1030 240h3v1h-3zM1029 241h5v1h-5zM1028 242h7v1h-7zM1028 243h7v1h-7zM1028 244h7v1h-7zM1029 245h5v1h-5zM1029 246h5v1h-5zM1031 247h1v1h-1zM1011 249h3v1h-3zM1010 250h5v1h-5zM1009 251h7v1h-7zM1009 252h7v1h-7zM1009 253h7v1h-7zM1010 254h5v1h-5zM1010 255h5v1h-5zM1012 256h1v1h-1zM978 258h3v1h-3zM977 259h5v1h-5zM976 260h7v1h-7zM976 261h7v1h-7zM976 262h7v1h-7zM977 263h5v1h-5zM977 264h5v1h-5zM979 265h1v1h-1zM998 264h3v1h-3zM997 265h5v1h-5zM996 266h7v1h-7zM996 267h7v1h-7zM996 268h7v1h-7zM997 269h5v1h-5zM997 270h5v1h-5zM999 271h1v1h-1zM1011 271h3v1h-3zM1010 272h5v1h-5zM1009 273h7v1h-7zM1009 274h7v1h-7zM1009 275h7v1h-7zM1010 276h5v1h-5zM1010 277h5v1h-5zM1012 278h1v1h-1zM1038 266h3v1h-3zM1037 267h5v1h-5zM1036 268h7v1h-7zM1036 269h7v1h-7zM1036 270h7v1h-7zM1037 271h5v1h-5zM1037 272h5v1h-5zM1039 273h1v1h-1zM1051 267h3v1h-3zM1050 268h5v1h-5zM1049 269h7v1h-7zM1049 270h7v1h-7zM1049 271h7v1h-7zM1050 272h5v1h-5zM1050 273h5v1h-5zM1052 274h1v1h-1zM1067 276h3v1h-3zM1066 277h5v1h-5zM1065 278h7v1h-7zM1065 279h7v1h-7zM1065 280h7v1h-7zM1066 281h5v1h-5zM1066 282h5v1h-5zM1068 283h1v1h-1zM1035 289h3v1h-3zM1034 290h5v1h-5zM1033 291h7v1h-7zM1033 292h7v1h-7zM1033 293h7v1h-7zM1034 294h5v1h-5zM1034 295h5v1h-5zM1036 296h1v1h-1zM1080 289h3v1h-3zM1079 290h5v1h-5zM1078 291h7v1h-7zM1078 292h7v1h-7zM1078 293h7v1h-7zM1079 294h5v1h-5zM1079 295h5v1h-5zM1081 296h1v1h-1zM1024 298h3v1h-3zM1023 299h5v1h-5zM1022 300h7v1h-7zM1022 301h7v1h-7zM1022 302h7v1h-7zM1023 303h5v1h-5zM1023 304h5v1h-5zM1025 305h1v1h-1zM1032 307h3v1h-3zM1031 308h5v1h-5zM1030 309h7v1h-7zM1030 310h7v1h-7zM1030 311h7v1h-7zM1031 312h5v1h-5zM1031 313h5v1h-5zM1033 314h1v1h-1zM1057 315h3v1h-3zM1056 316h5v1h-5zM1055 317h7v1h-7zM1055 318h7v1h-7zM1055 319h7v1h-7zM1056 320h5v1h-5zM1056 321h5v1h-5zM1058 322h1v1h-1zM942 309h3v1h-3zM941 310h5v1h-5zM940 311h7v1h-7zM940 312h7v1h-7zM940 313h7v1h-7zM941 314h5v1h-5zM941 315h5v1h-5zM943 316h1v1h-1zM979 310h3v1h-3zM978 311h5v1h-5zM977 312h7v1h-7zM977 313h7v1h-7zM977 314h7v1h-7zM978 315h5v1h-5zM978 316h5v1h-5zM980 317h1v1h-1zM911 329h3v1h-3zM910 330h5v1h-5zM909 331h7v1h-7zM909 332h7v1h-7zM909 333h7v1h-7zM910 334h5v1h-5zM910 335h5v1h-5zM912 336h1v1h-1zM1037 329h3v1h-3zM1036 330h5v1h-5zM1035 331h7v1h-7zM1035 332h7v1h-7zM1035 333h7v1h-7zM1036 334h5v1h-5zM1036 335h5v1h-5zM1038 336h1v1h-1zM1048 346h3v1h-3zM1047 347h5v1h-5zM1046 348h7v1h-7zM1046 349h7v1h-7zM1046 350h7v1h-7zM1047 351h5v1h-5zM1047 352h5v1h-5zM1049 353h1v1h-1zM958 359h3v1h-3zM957 360h5v1h-5zM956 361h7v1h-7zM956 362h7v1h-7zM956 363h7v1h-7zM957 364h5v1h-5zM957 365h5v1h-5zM959 366h1v1h-1zM1022 358h3v1h-3zM1021 359h5v1h-5zM1020 360h7v1h-7zM1020 361h7v1h-7zM1020 362h7v1h-7zM1021 363h5v1h-5zM1021 364h5v1h-5zM1023 365h1v1h-1zM930 368h3v1h-3zM929 369h5v1h-5zM928 370h7v1h-7zM928 371h7v1h-7zM928 372h7v1h-7zM929 373h5v1h-5zM929 374h5v1h-5zM931 375h1v1h-1zM1103 313h3v1h-3zM1102 314h5v1h-5zM1101 315h7v1h-7zM1101 316h7v1h-7zM1101 317h7v1h-7zM1102 318h5v1h-5zM1102 319h5v1h-5zM1104 320h1v1h-1zM1109 316h3v1h-3zM1108 317h5v1h-5zM1107 318h7v1h-7zM1107 319h7v1h-7zM1107 320h7v1h-7zM1108 321h5v1h-5zM1108 322h5v1h-5zM1110 323h1v1h-1zM1128 315h3v1h-3zM1127 316h5v1h-5zM1126 317h7v1h-7zM1126 318h7v1h-7zM1126 319h7v1h-7zM1127 320h5v1h-5zM1127 321h5v1h-5zM1129 322h1v1h-1zM1187 322h3v1h-3zM1186 323h5v1h-5zM1185 324h7v1h-7zM1185 325h7v1h-7zM1185 326h7v1h-7zM1186 327h5v1h-5zM1186 328h5v1h-5zM1188 329h1v1h-1zM1210 321h3v1h-3zM1209 322h5v1h-5zM1208 323h7v1h-7zM1208 324h7v1h-7zM1208 325h7v1h-7zM1209 326h5v1h-5zM1209 327h5v1h-5zM1211 328h1v1h-1zM1222 330h3v1h-3zM1221 331h5v1h-5zM1220 332h7v1h-7zM1220 333h7v1h-7zM1220 334h7v1h-7zM1221 335h5v1h-5zM1221 336h5v1h-5zM1223 337h1v1h-1zM1194 339h3v1h-3zM1193 340h5v1h-5zM1192 341h7v1h-7zM1192 342h7v1h-7zM1192 343h7v1h-7zM1193 344h5v1h-5zM1193 345h5v1h-5zM1195 346h1v1h-1zM1203 342h3v1h-3zM1202 343h5v1h-5zM1201 344h7v1h-7zM1201 345h7v1h-7zM1201 346h7v1h-7zM1202 347h5v1h-5zM1202 348h5v1h-5zM1204 349h1v1h-1zM1176 344h3v1h-3zM1175 345h5v1h-5zM1174 346h7v1h-7zM1174 347h7v1h-7zM1174 348h7v1h-7zM1175 349h5v1h-5zM1175 350h5v1h-5zM1177 351h1v1h-1zM1130 344h3v1h-3zM1129 345h5v1h-5zM1128 346h7v1h-7zM1128 347h7v1h-7zM1128 348h7v1h-7zM1129 349h5v1h-5zM1129 350h5v1h-5zM1131 351h1v1h-1zM1150 349h3v1h-3zM1149 350h5v1h-5zM1148 351h7v1h-7zM1148 352h7v1h-7zM1148 353h7v1h-7zM1149 354h5v1h-5zM1149 355h5v1h-5zM1151 356h1v1h-1zM1153 349h3v1h-3zM1152 350h5v1h-5zM1151 351h7v1h-7zM1151 352h7v1h-7zM1151 353h7v1h-7zM1152 354h5v1h-5zM1152 355h5v1h-5zM1154 356h1v1h-1zM1177 359h3v1h-3zM1176 360h5v1h-5zM1175 361h7v1h-7zM1175 362h7v1h-7zM1175 363h7v1h-7zM1176 364h5v1h-5zM1176 365h5v1h-5zM1178 366h1v1h-1zM1208 355h3v1h-3zM1207 356h5v1h-5zM1206 357h7v1h-7zM1206 358h7v1h-7zM1206 359h7v1h-7zM1207 360h5v1h-5zM1207 361h5v1h-5zM1209 362h1v1h-1zM1242 352h3v1h-3zM1241 353h5v1h-5zM1240 354h7v1h-7zM1240 355h7v1h-7zM1240 356h7v1h-7zM1241 357h5v1h-5zM1241 358h5v1h-5zM1243 359h1v1h-1zM1248 352h3v1h-3zM1247 353h5v1h-5zM1246 354h7v1h-7zM1246 355h7v1h-7zM1246 356h7v1h-7zM1247 357h5v1h-5zM1247 358h5v1h-5zM1249 359h1v1h-1zM1224 372h3v1h-3zM1223 373h5v1h-5zM1222 374h7v1h-7zM1222 375h7v1h-7zM1222 376h7v1h-7zM1223 377h5v1h-5zM1223 378h5v1h-5zM1225 379h1v1h-1zM1172 378h3v1h-3zM1171 379h5v1h-5zM1170 380h7v1h-7zM1170 381h7v1h-7zM1170 382h7v1h-7zM1171 383h5v1h-5zM1171 384h5v1h-5zM1173 385h1v1h-1zM1079 402h3v1h-3zM1078 403h5v1h-5zM1077 404h7v1h-7zM1077 405h7v1h-7zM1077 406h7v1h-7zM1078 407h5v1h-5zM1078 408h5v1h-5zM1080 409h1v1h-1zM1196 393h3v1h-3zM1195 394h5v1h-5zM1194 395h7v1h-7zM1194 396h7v1h-7zM1194 397h7v1h-7zM1195 398h5v1h-5zM1195 399h5v1h-5zM1197 400h1v1h-1zM1194 401h3v1h-3zM1193 402h5v1h-5zM1192 403h7v1h-7zM1192 404h7v1h-7zM1192 405h7v1h-7zM1193 406h5v1h-5zM1193 407h5v1h-5zM1195 408h1v1h-1zM1208 397h3v1h-3zM1207 398h5v1h-5zM1206 399h7v1h-7zM1206 400h7v1h-7zM1206 401h7v1h-7zM1207 402h5v1h-5zM1207 403h5v1h-5zM1209 404h1v1h-1zM1248 389h3v1h-3zM1247 390h5v1h-5zM1246 391h7v1h-7zM1246 392h7v1h-7zM1246 393h7v1h-7zM1247 394h5v1h-5zM1247 395h5v1h-5zM1249 396h1v1h-1zM1220 416h3v1h-3zM1219 417h5v1h-5zM1218 418h7v1h-7zM1218 419h7v1h-7zM1218 420h7v1h-7zM1219 421h5v1h-5zM1219 422h5v1h-5zM1221 423h1v1h-1zM1256 421h3v1h-3zM1255 422h5v1h-5zM1254 423h7v1h-7zM1254 424h7v1h-7zM1254 425h7v1h-7zM1255 426h5v1h-5zM1255 427h5v1h-5zM1257 428h1v1h-1zM1195 424h3v1h-3zM1194 425h5v1h-5zM1193 426h7v1h-7zM1193 427h7v1h-7zM1193 428h7v1h-7zM1194 429h5v1h-5zM1194 430h5v1h-5zM1196 431h1v1h-1zM1132 428h3v1h-3zM1131 429h5v1h-5zM1130 430h7v1h-7zM1130 431h7v1h-7zM1130 432h7v1h-7zM1131 433h5v1h-5zM1131 434h5v1h-5zM1133 435h1v1h-1zM1176 442h3v1h-3zM1175 443h5v1h-5zM1174 444h7v1h-7zM1174 445h7v1h-7zM1174 446h7v1h-7zM1175 447h5v1h-5zM1175 448h5v1h-5zM1177 449h1v1h-1zM1120 448h3v1h-3zM1119 449h5v1h-5zM1118 450h7v1h-7zM1118 451h7v1h-7zM1118 452h7v1h-7zM1119 453h5v1h-5zM1119 454h5v1h-5zM1121 455h1v1h-1zM1085 443h3v1h-3zM1084 444h5v1h-5zM1083 445h7v1h-7zM1083 446h7v1h-7zM1083 447h7v1h-7zM1084 448h5v1h-5zM1084 449h5v1h-5zM1086 450h1v1h-1zM1090 445h3v1h-3zM1089 446h5v1h-5zM1088 447h7v1h-7zM1088 448h7v1h-7zM1088 449h7v1h-7zM1089 450h5v1h-5zM1089 451h5v1h-5zM1091 452h1v1h-1zM1082 450h3v1h-3zM1081 451h5v1h-5zM1080 452h7v1h-7zM1080 453h7v1h-7zM1080 454h7v1h-7zM1081 455h5v1h-5zM1081 456h5v1h-5zM1083 457h1v1h-1zM1164 461h3v1h-3zM1163 462h5v1h-5zM1162 463h7v1h-7zM1162 464h7v1h-7zM1162 465h7v1h-7zM1163 466h5v1h-5zM1163 467h5v1h-5zM1165 468h1v1h-1zM1204 457h3v1h-3zM1203 458h5v1h-5zM1202 459h7v1h-7zM1202 460h7v1h-7zM1202 461h7v1h-7zM1203 462h5v1h-5zM1203 463h5v1h-5zM1205 464h1v1h-1zM1234 454h3v1h-3zM1233 455h5v1h-5zM1232 456h7v1h-7zM1232 457h7v1h-7zM1232 458h7v1h-7zM1233 459h5v1h-5zM1233 460h5v1h-5zM1235 461h1v1h-1zM1222 467h3v1h-3zM1221 468h5v1h-5zM1220 469h7v1h-7zM1220 470h7v1h-7zM1220 471h7v1h-7zM1221 472h5v1h-5zM1221 473h5v1h-5zM1223 474h1v1h-1zM1203 474h3v1h-3zM1202 475h5v1h-5zM1201 476h7v1h-7zM1201 477h7v1h-7zM1201 478h7v1h-7zM1202 479h5v1h-5zM1202 480h5v1h-5zM1204 481h1v1h-1zM1224 476h3v1h-3zM1223 477h5v1h-5zM1222 478h7v1h-7zM1222 479h7v1h-7zM1222 480h7v1h-7zM1223 481h5v1h-5zM1223 482h5v1h-5zM1225 483h1v1h-1zM1080 473h3v1h-3zM1079 474h5v1h-5zM1078 475h7v1h-7zM1078 476h7v1h-7zM1078 477h7v1h-7zM1079 478h5v1h-5zM1079 479h5v1h-5zM1081 480h1v1h-1zM1096 491h3v1h-3zM1095 492h5v1h-5zM1094 493h7v1h-7zM1094 494h7v1h-7zM1094 495h7v1h-7zM1095 496h5v1h-5zM1095 497h5v1h-5zM1097 498h1v1h-1zM1195 494h3v1h-3zM1194 495h5v1h-5zM1193 496h7v1h-7zM1193 497h7v1h-7zM1193 498h7v1h-7zM1194 499h5v1h-5zM1194 500h5v1h-5zM1196 501h1v1h-1zM1080 505h3v1h-3zM1079 506h5v1h-5zM1078 507h7v1h-7zM1078 508h7v1h-7zM1078 509h7v1h-7zM1079 510h5v1h-5zM1079 511h5v1h-5zM1081 512h1v1h-1zM1160 532h3v1h-3zM1159 533h5v1h-5zM1158 534h7v1h-7zM1158 535h7v1h-7zM1158 536h7v1h-7zM1159 537h5v1h-5zM1159 538h5v1h-5zM1161 539h1v1h-1zM869 391h3v1h-3zM868 392h5v1h-5zM867 393h7v1h-7zM867 394h7v1h-7zM867 395h7v1h-7zM868 396h5v1h-5zM868 397h5v1h-5zM870 398h1v1h-1zM842 419h3v1h-3zM841 420h5v1h-5zM840 421h7v1h-7zM840 422h7v1h-7zM840 423h7v1h-7zM841 424h5v1h-5zM841 425h5v1h-5zM843 426h1v1h-1zM858 424h3v1h-3zM857 425h5v1h-5zM856 426h7v1h-7zM856 427h7v1h-7zM856 428h7v1h-7zM857 429h5v1h-5zM857 430h5v1h-5zM859 431h1v1h-1zM869 417h3v1h-3zM868 418h5v1h-5zM867 419h7v1h-7zM867 420h7v1h-7zM867 421h7v1h-7zM868 422h5v1h-5zM868 423h5v1h-5zM870 424h1v1h-1zM869 424h3v1h-3zM868 425h5v1h-5zM867 426h7v1h-7zM867 427h7v1h-7zM867 428h7v1h-7zM868 429h5v1h-5zM868 430h5v1h-5zM870 431h1v1h-1zM891 435h3v1h-3zM890 436h5v1h-5zM889 437h7v1h-7zM889 438h7v1h-7zM889 439h7v1h-7zM890 440h5v1h-5zM890 441h5v1h-5zM892 442h1v1h-1zM902 404h3v1h-3zM901 405h5v1h-5zM900 406h7v1h-7zM900 407h7v1h-7zM900 408h7v1h-7zM901 409h5v1h-5zM901 410h5v1h-5zM903 411h1v1h-1zM916 421h3v1h-3zM915 422h5v1h-5zM914 423h7v1h-7zM914 424h7v1h-7zM914 425h7v1h-7zM915 426h5v1h-5zM915 427h5v1h-5zM917 428h1v1h-1zM909 448h3v1h-3zM908 449h5v1h-5zM907 450h7v1h-7zM907 451h7v1h-7zM907 452h7v1h-7zM908 453h5v1h-5zM908 454h5v1h-5zM910 455h1v1h-1zM945 441h3v1h-3zM944 442h5v1h-5zM943 443h7v1h-7zM943 444h7v1h-7zM943 445h7v1h-7zM944 446h5v1h-5zM944 447h5v1h-5zM946 448h1v1h-1zM937 456h3v1h-3zM936 457h5v1h-5zM935 458h7v1h-7zM935 459h7v1h-7zM935 460h7v1h-7zM936 461h5v1h-5zM936 462h5v1h-5zM938 463h1v1h-1zM928 466h3v1h-3zM927 467h5v1h-5zM926 468h7v1h-7zM926 469h7v1h-7zM926 470h7v1h-7zM927 471h5v1h-5zM927 472h5v1h-5zM929 473h1v1h-1zM961 398h3v1h-3zM960 399h5v1h-5zM959 400h7v1h-7zM959 401h7v1h-7zM959 402h7v1h-7zM960 403h5v1h-5zM960 404h5v1h-5zM962 405h1v1h-1zM976 413h3v1h-3zM975 414h5v1h-5zM974 415h7v1h-7zM974 416h7v1h-7zM974 417h7v1h-7zM975 418h5v1h-5zM975 419h5v1h-5zM977 420h1v1h-1zM980 411h3v1h-3zM979 412h5v1h-5zM978 413h7v1h-7zM978 414h7v1h-7zM978 415h7v1h-7zM979 416h5v1h-5zM979 417h5v1h-5zM981 418h1v1h-1zM1019 398h3v1h-3zM1018 399h5v1h-5zM1017 400h7v1h-7zM1017 401h7v1h-7zM1017 402h7v1h-7zM1018 403h5v1h-5zM1018 404h5v1h-5zM1020 405h1v1h-1zM1048 405h3v1h-3zM1047 406h5v1h-5zM1046 407h7v1h-7zM1046 408h7v1h-7zM1046 409h7v1h-7zM1047 410h5v1h-5zM1047 411h5v1h-5zM1049 412h1v1h-1zM961 444h3v1h-3zM960 445h5v1h-5zM959 446h7v1h-7zM959 447h7v1h-7zM959 448h7v1h-7zM960 449h5v1h-5zM960 450h5v1h-5zM962 451h1v1h-1zM967 446h3v1h-3zM966 447h5v1h-5zM965 448h7v1h-7zM965 449h7v1h-7zM965 450h7v1h-7zM966 451h5v1h-5zM966 452h5v1h-5zM968 453h1v1h-1zM982 445h3v1h-3zM981 446h5v1h-5zM980 447h7v1h-7zM980 448h7v1h-7zM980 449h7v1h-7zM981 450h5v1h-5zM981 451h5v1h-5zM983 452h1v1h-1zM981 450h3v1h-3zM980 451h5v1h-5zM979 452h7v1h-7zM979 453h7v1h-7zM979 454h7v1h-7zM980 455h5v1h-5zM980 456h5v1h-5zM982 457h1v1h-1zM1025 446h3v1h-3zM1024 447h5v1h-5zM1023 448h7v1h-7zM1023 449h7v1h-7zM1023 450h7v1h-7zM1024 451h5v1h-5zM1024 452h5v1h-5zM1026 453h1v1h-1zM1034 444h3v1h-3zM1033 445h5v1h-5zM1032 446h7v1h-7zM1032 447h7v1h-7zM1032 448h7v1h-7zM1033 449h5v1h-5zM1033 450h5v1h-5zM1035 451h1v1h-1zM1050 445h3v1h-3zM1049 446h5v1h-5zM1048 447h7v1h-7zM1048 448h7v1h-7zM1048 449h7v1h-7zM1049 450h5v1h-5zM1049 451h5v1h-5zM1051 452h1v1h-1zM1060 443h3v1h-3zM1059 444h5v1h-5zM1058 445h7v1h-7zM1058 446h7v1h-7zM1058 447h7v1h-7zM1059 448h5v1h-5zM1059 449h5v1h-5zM1061 450h1v1h-1zM1058 451h3v1h-3zM1057 452h5v1h-5zM1056 453h7v1h-7zM1056 454h7v1h-7zM1056 455h7v1h-7zM1057 456h5v1h-5zM1057 457h5v1h-5zM1059 458h1v1h-1zM1027 455h3v1h-3zM1026 456h5v1h-5zM1025 457h7v1h-7zM1025 458h7v1h-7zM1025 459h7v1h-7zM1026 460h5v1h-5zM1026 461h5v1h-5zM1028 462h1v1h-1zM1010 458h3v1h-3zM1009 459h5v1h-5zM1008 460h7v1h-7zM1008 461h7v1h-7zM1008 462h7v1h-7zM1009 463h5v1h-5zM1009 464h5v1h-5zM1011 465h1v1h-1zM1017 460h3v1h-3zM1016 461h5v1h-5zM1015 462h7v1h-7zM1015 463h7v1h-7zM1015 464h7v1h-7zM1016 465h5v1h-5zM1016 466h5v1h-5zM1018 467h1v1h-1zM963 469h3v1h-3zM962 470h5v1h-5zM961 471h7v1h-7zM961 472h7v1h-7zM961 473h7v1h-7zM962 474h5v1h-5zM962 475h5v1h-5zM964 476h1v1h-1zM955 467h3v1h-3zM954 468h5v1h-5zM953 469h7v1h-7zM953 470h7v1h-7zM953 471h7v1h-7zM954 472h5v1h-5zM954 473h5v1h-5zM956 474h1v1h-1zM932 478h3v1h-3zM931 479h5v1h-5zM930 480h7v1h-7zM930 481h7v1h-7zM930 482h7v1h-7zM931 483h5v1h-5zM931 484h5v1h-5zM933 485h1v1h-1zM969 480h3v1h-3zM968 481h5v1h-5zM967 482h7v1h-7zM967 483h7v1h-7zM967 484h7v1h-7zM968 485h5v1h-5zM968 486h5v1h-5zM970 487h1v1h-1zM914 493h3v1h-3zM913 494h5v1h-5zM912 495h7v1h-7zM912 496h7v1h-7zM912 497h7v1h-7zM913 498h5v1h-5zM913 499h5v1h-5zM915 500h1v1h-1zM956 492h3v1h-3zM955 493h5v1h-5zM954 494h7v1h-7zM954 495h7v1h-7zM954 496h7v1h-7zM955 497h5v1h-5zM955 498h5v1h-5zM957 499h1v1h-1zM955 499h3v1h-3zM954 500h5v1h-5zM953 501h7v1h-7zM953 502h7v1h-7zM953 503h7v1h-7zM954 504h5v1h-5zM954 505h5v1h-5zM956 506h1v1h-1zM989 487h3v1h-3zM988 488h5v1h-5zM987 489h7v1h-7zM987 490h7v1h-7zM987 491h7v1h-7zM988 492h5v1h-5zM988 493h5v1h-5zM990 494h1v1h-1zM995 495h3v1h-3zM994 496h5v1h-5zM993 497h7v1h-7zM993 498h7v1h-7zM993 499h7v1h-7zM994 500h5v1h-5zM994 501h5v1h-5zM996 502h1v1h-1zM989 498h3v1h-3zM988 499h5v1h-5zM987 500h7v1h-7zM987 501h7v1h-7zM987 502h7v1h-7zM988 503h5v1h-5zM988 504h5v1h-5zM990 505h1v1h-1zM1004 505h3v1h-3zM1003 506h5v1h-5zM1002 507h7v1h-7zM1002 508h7v1h-7zM1002 509h7v1h-7zM1003 510h5v1h-5zM1003 511h5v1h-5zM1005 512h1v1h-1zM1045 478h3v1h-3zM1044 479h5v1h-5zM1043 480h7v1h-7zM1043 481h7v1h-7zM1043 482h7v1h-7zM1044 483h5v1h-5zM1044 484h5v1h-5zM1046 485h1v1h-1zM1064 479h3v1h-3zM1063 480h5v1h-5zM1062 481h7v1h-7zM1062 482h7v1h-7zM1062 483h7v1h-7zM1063 484h5v1h-5zM1063 485h5v1h-5zM1065 486h1v1h-1zM1020 489h3v1h-3zM1019 490h5v1h-5zM1018 491h7v1h-7zM1018 492h7v1h-7zM1018 493h7v1h-7zM1019 494h5v1h-5zM1019 495h5v1h-5zM1021 496h1v1h-1zM1026 503h3v1h-3zM1025 504h5v1h-5zM1024 505h7v1h-7zM1024 506h7v1h-7zM1024 507h7v1h-7zM1025 508h5v1h-5zM1025 509h5v1h-5zM1027 510h1v1h-1zM1011 515h3v1h-3zM1010 516h5v1h-5zM1009 517h7v1h-7zM1009 518h7v1h-7zM1009 519h7v1h-7zM1010 520h5v1h-5zM1010 521h5v1h-5zM1012 522h1v1h-1zM1010 522h3v1h-3zM1009 523h5v1h-5zM1008 524h7v1h-7zM1008 525h7v1h-7zM1008 526h7v1h-7zM1009 527h5v1h-5zM1009 528h5v1h-5zM1011 529h1v1h-1zM1059 515h3v1h-3zM1058 516h5v1h-5zM1057 517h7v1h-7zM1057 518h7v1h-7zM1057 519h7v1h-7zM1058 520h5v1h-5zM1058 521h5v1h-5zM1060 522h1v1h-1zM930 511h3v1h-3zM929 512h5v1h-5zM928 513h7v1h-7zM928 514h7v1h-7zM928 515h7v1h-7zM929 516h5v1h-5zM929 517h5v1h-5zM931 518h1v1h-1zM978 518h3v1h-3zM977 519h5v1h-5zM976 520h7v1h-7zM976 521h7v1h-7zM976 522h7v1h-7zM977 523h5v1h-5zM977 524h5v1h-5zM979 525h1v1h-1zM912 519h3v1h-3zM911 520h5v1h-5zM910 521h7v1h-7zM910 522h7v1h-7zM910 523h7v1h-7zM911 524h5v1h-5zM911 525h5v1h-5zM913 526h1v1h-1zM913 524h3v1h-3zM912 525h5v1h-5zM911 526h7v1h-7zM911 527h7v1h-7zM911 528h7v1h-7zM912 529h5v1h-5zM912 530h5v1h-5zM914 531h1v1h-1zM922 524h3v1h-3zM921 525h5v1h-5zM920 526h7v1h-7zM920 527h7v1h-7zM920 528h7v1h-7zM921 529h5v1h-5zM921 530h5v1h-5zM923 531h1v1h-1zM941 523h3v1h-3zM940 524h5v1h-5zM939 525h7v1h-7zM939 526h7v1h-7zM939 527h7v1h-7zM940 528h5v1h-5zM940 529h5v1h-5zM942 530h1v1h-1zM950 522h3v1h-3zM949 523h5v1h-5zM948 524h7v1h-7zM948 525h7v1h-7zM948 526h7v1h-7zM949 527h5v1h-5zM949 528h5v1h-5zM951 529h1v1h-1zM970 534h3v1h-3zM969 535h5v1h-5zM968 536h7v1h-7zM968 537h7v1h-7zM968 538h7v1h-7zM969 539h5v1h-5zM969 540h5v1h-5zM971 541h1v1h-1zM983 533h3v1h-3zM982 534h5v1h-5zM981 535h7v1h-7zM981 536h7v1h-7zM981 537h7v1h-7zM982 538h5v1h-5zM982 539h5v1h-5zM984 540h1v1h-1zM997 530h3v1h-3zM996 531h5v1h-5zM995 532h7v1h-7zM995 533h7v1h-7zM995 534h7v1h-7zM996 535h5v1h-5zM996 536h5v1h-5zM998 537h1v1h-1zM1041 539h3v1h-3zM1040 540h5v1h-5zM1039 541h7v1h-7zM1039 542h7v1h-7zM1039 543h7v1h-7zM1040 544h5v1h-5zM1040 545h5v1h-5zM1042 546h1v1h-1zM1047 539h3v1h-3zM1046 540h5v1h-5zM1045 541h7v1h-7zM1045 542h7v1h-7zM1045 543h7v1h-7zM1046 544h5v1h-5zM1046 545h5v1h-5zM1048 546h1v1h-1zM1010 546h3v1h-3zM1009 547h5v1h-5zM1008 548h7v1h-7zM1008 549h7v1h-7zM1008 550h7v1h-7zM1009 551h5v1h-5zM1009 552h5v1h-5zM1011 553h1v1h-1zM920 550h3v1h-3zM919 551h5v1h-5zM918 552h7v1h-7zM918 553h7v1h-7zM918 554h7v1h-7zM919 555h5v1h-5zM919 556h5v1h-5zM921 557h1v1h-1zM966 548h3v1h-3zM965 549h5v1h-5zM964 550h7v1h-7zM964 551h7v1h-7zM964 552h7v1h-7zM965 553h5v1h-5zM965 554h5v1h-5zM967 555h1v1h-1zM950 553h3v1h-3zM949 554h5v1h-5zM948 555h7v1h-7zM948 556h7v1h-7zM948 557h7v1h-7zM949 558h5v1h-5zM949 559h5v1h-5zM951 560h1v1h-1zM944 559h3v1h-3zM943 560h5v1h-5zM942 561h7v1h-7zM942 562h7v1h-7zM942 563h7v1h-7zM943 564h5v1h-5zM943 565h5v1h-5zM945 566h1v1h-1zM987 565h3v1h-3zM986 566h5v1h-5zM985 567h7v1h-7zM985 568h7v1h-7zM985 569h7v1h-7zM986 570h5v1h-5zM986 571h5v1h-5zM988 572h1v1h-1zM1055 556h3v1h-3zM1054 557h5v1h-5zM1053 558h7v1h-7zM1053 559h7v1h-7zM1053 560h7v1h-7zM1054 561h5v1h-5zM1054 562h5v1h-5zM1056 563h1v1h-1zM1074 576h3v1h-3zM1073 577h5v1h-5zM1072 578h7v1h-7zM1072 579h7v1h-7zM1072 580h7v1h-7zM1073 581h5v1h-5zM1073 582h5v1h-5zM1075 583h1v1h-1zM929 581h3v1h-3zM928 582h5v1h-5zM927 583h7v1h-7zM927 584h7v1h-7zM927 585h7v1h-7zM928 586h5v1h-5zM928 587h5v1h-5zM930 588h1v1h-1zM935 591h3v1h-3zM934 592h5v1h-5zM933 593h7v1h-7zM933 594h7v1h-7zM933 595h7v1h-7zM934 596h5v1h-5zM934 597h5v1h-5zM936 598h1v1h-1zM937 597h3v1h-3zM936 598h5v1h-5zM935 599h7v1h-7zM935 600h7v1h-7zM935 601h7v1h-7zM936 602h5v1h-5zM936 603h5v1h-5zM938 604h1v1h-1zM962 589h3v1h-3zM961 590h5v1h-5zM960 591h7v1h-7zM960 592h7v1h-7zM960 593h7v1h-7zM961 594h5v1h-5zM961 595h5v1h-5zM963 596h1v1h-1zM977 590h3v1h-3zM976 591h5v1h-5zM975 592h7v1h-7zM975 593h7v1h-7zM975 594h7v1h-7zM976 595h5v1h-5zM976 596h5v1h-5zM978 597h1v1h-1zM1006 594h3v1h-3zM1005 595h5v1h-5zM1004 596h7v1h-7zM1004 597h7v1h-7zM1004 598h7v1h-7zM1005 599h5v1h-5zM1005 600h5v1h-5zM1007 601h1v1h-1zM1052 610h3v1h-3zM1051 611h5v1h-5zM1050 612h7v1h-7zM1050 613h7v1h-7zM1050 614h7v1h-7zM1051 615h5v1h-5zM1051 616h5v1h-5zM1053 617h1v1h-1zM1096 561h3v1h-3zM1095 562h5v1h-5zM1094 563h7v1h-7zM1094 564h7v1h-7zM1094 565h7v1h-7zM1095 566h5v1h-5zM1095 567h5v1h-5zM1097 568h1v1h-1zM974 623h3v1h-3zM973 624h5v1h-5zM972 625h7v1h-7zM972 626h7v1h-7zM972 627h7v1h-7zM973 628h5v1h-5zM973 629h5v1h-5zM975 630h1v1h-1zM956 646h3v1h-3zM955 647h5v1h-5zM954 648h7v1h-7zM954 649h7v1h-7zM954 650h7v1h-7zM955 651h5v1h-5zM955 652h5v1h-5zM957 653h1v1h-1zM1023 646h3v1h-3zM1022 647h5v1h-5zM1021 648h7v1h-7zM1021 649h7v1h-7zM1021 650h7v1h-7zM1022 651h5v1h-5zM1022 652h5v1h-5zM1024 653h1v1h-1zM1085 643h3v1h-3zM1084 644h5v1h-5zM1083 645h7v1h-7zM1083 646h7v1h-7zM1083 647h7v1h-7zM1084 648h5v1h-5zM1084 649h5v1h-5zM1086 650h1v1h-1zM1086 650h3v1h-3zM1085 651h5v1h-5zM1084 652h7v1h-7zM1084 653h7v1h-7zM1084 654h7v1h-7zM1085 655h5v1h-5zM1085 656h5v1h-5zM1087 657h1v1h-1zM1000 662h3v1h-3zM999 663h5v1h-5zM998 664h7v1h-7zM998 665h7v1h-7zM998 666h7v1h-7zM999 667h5v1h-5zM999 668h5v1h-5zM1001 669h1v1h-1zM1059 666h3v1h-3zM1058 667h5v1h-5zM1057 668h7v1h-7zM1057 669h7v1h-7zM1057 670h7v1h-7zM1058 671h5v1h-5zM1058 672h5v1h-5zM1060 673h1v1h-1zM1035 677h3v1h-3zM1034 678h5v1h-5zM1033 679h7v1h-7zM1033 680h7v1h-7zM1033 681h7v1h-7zM1034 682h5v1h-5zM1034 683h5v1h-5zM1036 684h1v1h-1zM1018 684h3v1h-3zM1017 685h5v1h-5zM1016 686h7v1h-7zM1016 687h7v1h-7zM1016 688h7v1h-7zM1017 689h5v1h-5zM1017 690h5v1h-5zM1019 691h1v1h-1zM979 687h3v1h-3zM978 688h5v1h-5zM977 689h7v1h-7zM977 690h7v1h-7zM977 691h7v1h-7zM978 692h5v1h-5zM978 693h5v1h-5zM980 694h1v1h-1zM1008 693h3v1h-3zM1007 694h5v1h-5zM1006 695h7v1h-7zM1006 696h7v1h-7zM1006 697h7v1h-7zM1007 698h5v1h-5zM1007 699h5v1h-5zM1009 700h1v1h-1zM1049 698h3v1h-3zM1048 699h5v1h-5zM1047 700h7v1h-7zM1047 701h7v1h-7zM1047 702h7v1h-7zM1048 703h5v1h-5zM1048 704h5v1h-5zM1050 705h1v1h-1zM1010 706h3v1h-3zM1009 707h5v1h-5zM1008 708h7v1h-7zM1008 709h7v1h-7zM1008 710h7v1h-7zM1009 711h5v1h-5zM1009 712h5v1h-5zM1011 713h1v1h-1zM992 718h3v1h-3zM991 719h5v1h-5zM990 720h7v1h-7zM990 721h7v1h-7zM990 722h7v1h-7zM991 723h5v1h-5zM991 724h5v1h-5zM993 725h1v1h-1zM1035 719h3v1h-3zM1034 720h5v1h-5zM1033 721h7v1h-7zM1033 722h7v1h-7zM1033 723h7v1h-7zM1034 724h5v1h-5zM1034 725h5v1h-5zM1036 726h1v1h-1z" fill="#33a64a"/><path d="M901.5 409L871 393.5M901.5 409Q885 405 871 394.5M901.5 409L870 406M901.5 409Q880 408 862 425M901.5 409Q875 420 862 425M901.5 409L862 425M901.5 409Q890 425 862 425M862 425L842.5 404M862 425Q850 410 843 404.5M862 425L870 440M862 425Q862 435 869 441M862 425Q880 455 910.5 449.5M862 425Q895 445 910.5 449.5M862 425L910.5 449.5M862 425Q870 440 900 448M901.5 409Q901 430 910.5 449.5M901.5 409Q902 430 910.5 449.5M901.5 409Q903 430 910.5 449.5M901.5 409Q904 430 910.5 449.5M901.5 409Q905 430 910.5 449.5M901.5 409Q906 430 910.5 449.5M901.5 409Q907 430 910.5 449.5M901.5 409Q908 430 910.5 449.5M901.5 409Q909 430 910.5 449.5M901.5 409Q910 430 910.5 449.5M901.5 409Q911 430 910.5 449.5M901.5 409Q912 430 910.5 449.5M901.5 409Q913 430 910.5 449.5M910.5 449.5Q908 473 911 497M910.5 449.5Q909 473 911 497M910.5 449.5Q910 473 911 497M910.5 449.5Q911 473 911 497M910.5 449.5Q912 473 911 497M901.5 409L917 425M917 425L910.5 449.5M917 425Q912 440 910.5 449.5M901.5 409Q940 392 982 412M901.5 409L977 415.5M901.5 409Q940 405 977 415.5M901.5 409L1057.5 449M901.5 409Q990 420 1121 450.5M910.5 449.5L977 415.5M910.5 449.5L958 426M910.5 449.5Q908 475 911 497M910.5 449.5Q910 475 911 497M910.5 449.5Q912 475 911 497M901.5 409Q893 455 911 497M901.5 409Q889 450 911 497M901.5 409Q900 470 911 497M911 497L977 415.5M912 497L978 415.5M911 497L1020.5 402M911 497L953 465M911 497L958 426M911 497L997.5 420M932 514L1057.5 449M932 514L960 461M932 514L951 480M953 465Q1003 455 1054 466M953 465Q1003 478 1054 466M953 465L1054 466M953 465L1057.5 449M953 465L1015 455M1020.5 402Q1070 405 1121 450.5M1020.5 402Q1075 412 1121 450.5M1020.5 402Q1080 420 1121 450.5M1020.5 402Q1090 428 1121 450.5M977 415.5L1121 450.5M977 415.5Q1040 420 1121 450.5M977 415.5L1057.5 449M977 415.5Q1015 430 1057.5 449M1020.5 402L1057.5 449M1020.5 402Q1030 430 1057.5 449M1020.5 402L1058 452M1057.5 449L1121 450.5M1040 455Q1080 451 1121 450.5M1085 454L1121 450.5M901.5 409L1000 400M901.5 409Q950 398 977 415M910 498L885.3 877M912 500Q970 645 910 877" fill="none" stroke="#000" stroke-width="1" shape-rendering="crispEdges"/><ellipse cx="1002" cy="407.5" rx="17.5" ry="7.5" transform="rotate(-19 1002 407.5)" fill="none" stroke="#1a1a1a" stroke-width="6"/><path d="M984 412 Q1002 398 1019 403 M986 413 Q1004 405 1019 402" fill="none" stroke="#222" stroke-width="0.8"/><path d="M983 485l2 1l-1 2M983 485l3 0M1013 483l2 1l-1 2M1013 483l3 0M1001 494l2 1l-1 2M1001 494l3 0M977 505l2 1l-1 2M977 505l3 0M1023 504l2 1l-1 2M1023 504l3 0M1027 511l2 1l-1 2M1027 511l3 0M1001 522l2 1l-1 2M1001 522l3 0M1011 522l2 1l-1 2M1011 522l3 0M943 537l2 1l-1 2M943 537l3 0M951 547l2 1l-1 2M951 547l3 0M967 549l2 1l-1 2M967 549l3 0M930 563l2 1l-1 2M930 563l3 0M944 570l2 1l-1 2M944 570l3 0M946 576l2 1l-1 2M946 576l3 0M1083 491l2 1l-1 2M1083 491l3 0M1028 494l2 1l-1 2M1028 494l3 0M921 502l2 1l-1 2M921 502l3 0M1075 460l2 1l-1 2M1075 460l3 0M1091 468l2 1l-1 2M1091 468l3 0M1090 486l2 1l-1 2M1090 486l3 0M1095 488l2 1l-1 2M1095 488l3 0M1083 501l2 1l-1 2M1083 501l3 0M1037 475l2 1l-1 2M1037 475l3 0M1066 435l2 1l-1 2M1066 435l3 0M992 428l2 1l-1 2M992 428l3 0M1025 440l2 1l-1 2M1025 440l3 0M1002 466l2 1l-1 2M1002 466l3 0" stroke="#000" stroke-width="1" fill="none" shape-rendering="crispEdges"/></g></svg>
</body></html>
